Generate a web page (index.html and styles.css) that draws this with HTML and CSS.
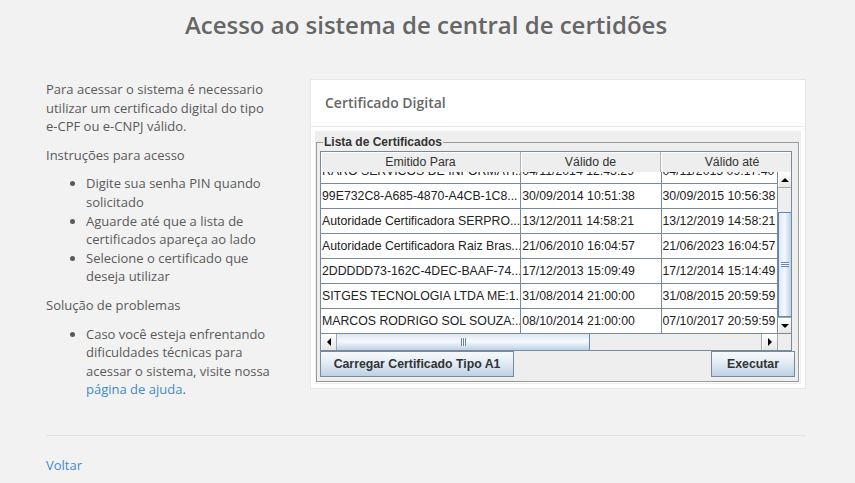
FILE: index.html
```html
<!DOCTYPE html>
<html lang="pt-BR">
<head>
    <meta charset="UTF-8">
    <title>Acesso ao sistema de central de certidões</title>
    <link rel="stylesheet" href="styles.css">
</head>
<body>
    <div class="pagina">
        <h1 class="titulo">Acesso ao sistema de central de certidões</h1>

        <div class="conteudo">
            <!-- Instruções -->
            <div class="info">
                <p>Para acessar o sistema é necessario utilizar um certificado digital do tipo <span class="junto">e-CPF</span> ou <span class="junto">e-CNPJ</span> válido.</p>
                <p>Instruções para acesso</p>
                <ul>
                    <li>Digite sua senha PIN quando solicitado</li>
                    <li>Aguarde até que a lista de certificados apareça ao lado</li>
                    <li>Selecione o certificado que deseja utilizar</li>
                </ul>
                <p>Solução de problemas</p>
                <ul>
                    <li>Caso você esteja enfrentando dificuldades técnicas para acessar o sistema, visite nossa <a href="#">página de ajuda</a>.</li>
                </ul>
            </div>

            <!-- Painel do certificado -->
            <div class="painel">
                <div class="painel-cabecalho">Certificado Digital</div>
                <div class="painel-corpo">
                    <div class="applet">
                        <fieldset class="lista">
                            <legend>Lista de Certificados</legend>

                            <div class="tabela">
                                <div class="tabela-cabecalho">
                                    <div class="col col1">Emitido Para</div>
                                    <div class="col col2">Válido de</div>
                                    <div class="col col3">Válido até</div>
                                </div>

                                <div class="tabela-area">
                                    <div class="linhas">
                                        <div class="linhas-rolagem">
                                            <div class="linha"><div class="cel col1">RARO SERVICOS DE INFORMATI...</div><div class="cel col2">04/11/2014 12:43:29</div><div class="cel col3">04/11/2015 09:17:40</div></div>
                                            <div class="linha"><div class="cel col1">99E732C8-A685-4870-A4CB-1C8...</div><div class="cel col2">30/09/2014 10:51:38</div><div class="cel col3">30/09/2015 10:56:38</div></div>
                                            <div class="linha"><div class="cel col1">Autoridade Certificadora SERPRO...</div><div class="cel col2">13/12/2011 14:58:21</div><div class="cel col3">13/12/2019 14:58:21</div></div>
                                            <div class="linha"><div class="cel col1">Autoridade Certificadora Raiz Bras...</div><div class="cel col2">21/06/2010 16:04:57</div><div class="cel col3">21/06/2023 16:04:57</div></div>
                                            <div class="linha"><div class="cel col1">2DDDDD73-162C-4DEC-BAAF-74...</div><div class="cel col2">17/12/2013 15:09:49</div><div class="cel col3">17/12/2014 15:14:49</div></div>
                                            <div class="linha"><div class="cel col1">SITGES TECNOLOGIA LTDA ME:1...</div><div class="cel col2">31/08/2014 21:00:00</div><div class="cel col3">31/08/2015 20:59:59</div></div>
                                            <div class="linha"><div class="cel col1">MARCOS RODRIGO SOL SOUZA:...</div><div class="cel col2">08/10/2014 21:00:00</div><div class="cel col3">07/10/2017 20:59:59</div></div>
                                        </div>
                                    </div>

                                    <!-- barra de rolagem vertical -->
                                    <div class="barra-v">
                                        <div class="seta seta-v"><span class="tri tri-cima"></span></div>
                                        <div class="trilho-v">
                                            <div class="espaco-v"></div>
                                            <div class="polegar-v"><span class="garra-v"></span></div>
                                        </div>
                                        <div class="seta seta-v"><span class="tri tri-baixo"></span></div>
                                    </div>
                                </div>

                                <!-- barra de rolagem horizontal -->
                                <div class="barra-h">
                                    <div class="seta seta-h"><span class="tri tri-esq"></span></div>
                                    <div class="trilho-h">
                                        <div class="polegar-h"><span class="garra-h"></span></div>
                                    </div>
                                    <div class="seta seta-h"><span class="tri tri-dir"></span></div>
                                    <div class="canto"></div>
                                </div>
                            </div>

                            <div class="botoes">
                                <button class="botao botao-carregar">Carregar Certificado Tipo A1</button>
                                <button class="botao botao-executar">Executar</button>
                            </div>
                        </fieldset>
                    </div>
                </div>
            </div>
        </div>

        <hr class="divisor">
        <a class="voltar" href="#">Voltar</a>
    </div>
</body>
</html>
```

FILE: styles.css
```css
/* Página */
body {
    margin: 0;
    background-color: #f2f2f2;
    font-family: "Open Sans", Arial, sans-serif;
    font-size: 13px;
    line-height: 18.6px;
    color: #5a5a5a;
}

a {
    color: #428bca;
    text-decoration: none;
}

.pagina {
    width: 760px;
    margin-left: 46px;
}

.titulo {
    margin: 12px 0 41px;
    font-size: 24px;
    line-height: 26px;
    font-weight: 600;
    color: #666;
    text-align: center;
}

.conteudo {
    display: grid;
    grid-template-columns: 234px 496px;
    column-gap: 30px;
}

/* Coluna de instruções */
.info {
    padding-top: 1px;
}

.info p {
    margin: 0 0 10px;
}

.info ul {
    margin: 0 0 10px;
    padding-left: 40px;
}

.junto {
    white-space: nowrap;
}

/* Painel */
.painel {
    align-self: start;
    background: #fff;
    border: 1px solid #e6e6e6;
}

.painel-cabecalho {
    height: 46px;
    padding: 0 14px;
    border-bottom: 1px solid #e9e9e9;
    font-size: 14px;
    font-weight: 600;
    line-height: 46px;
    color: #666;
}

.painel-corpo {
    padding: 4px;
}

/* Applet Java */
.applet {
    padding: 4px 2px 2px 1px;
    background: #eeeeee;
    font-family: Arial, "Liberation Sans", sans-serif;
    color: #222;
}

.lista {
    margin: 0;
    padding: 2px 3px 4px;
    border: 1px solid #9a9a9a;
    box-shadow: 1px 1px 0 #fff;
}

.lista legend {
    margin-left: 3px;
    padding: 0 1px;
    font-size: 12px;
    font-weight: bold;
    line-height: 14px;
    color: #333;
}

/* Tabela */
.tabela {
    width: 470px;
    border: 1px solid #7a8a99;
}

.tabela-cabecalho {
    display: flex;
    height: 20px;
    background: #eeeeee;
    font-size: 12.3px;
    line-height: 21px;
    color: #333;
}

.tabela-cabecalho .col {
    text-align: center;
    border-right: 1px solid #a9b4bf;
    box-shadow: inset 1px 1px 0 #fff;
}

.tabela-cabecalho .col3 {
    flex: 1;
    padding-left: 12px;
    border-right: 0;
}

.col1 { width: 199px; }
.col2 { width: 139px; }
.col3 { width: 115px; }

.tabela-area {
    display: flex;
    height: 161px;
}

.linhas {
    width: 456px;
    background: #fff;
    overflow: hidden;
}

.linhas-rolagem {
    margin-top: -13px;
}

.linha {
    display: flex;
    height: 24px;
    border-bottom: 1px solid #7a8a99;
}

.cel {
    padding-left: 1px;
    border-right: 1px solid #7a8a99;
    font-size: 12.3px;
    line-height: 24px;
    white-space: nowrap;
    overflow: hidden;
}

.cel.col3 {
    border-right: 0;
}

/* Barras de rolagem (Metal / Ocean) */
.barra-v {
    display: flex;
    flex-direction: column;
    width: 13px;
    border-left: 1px solid #7a8a99;
}

.seta {
    display: flex;
    align-items: center;
    justify-content: center;
    background: linear-gradient(#ffffff, #e6e6e6);
    box-shadow: inset 1px 1px 0 #fff;
}

.seta-v {
    height: 15px;
}

.seta-v:first-child {
    border-bottom: 1px solid #a0aab4;
}

.seta-v:last-child {
    border-top: 1px solid #a0aab4;
}

.tri {
    width: 0;
    height: 0;
}

.tri-cima {
    border-left: 4px solid transparent;
    border-right: 4px solid transparent;
    border-bottom: 4px solid #000;
}

.tri-baixo {
    border-left: 4px solid transparent;
    border-right: 4px solid transparent;
    border-top: 4px solid #000;
}

.tri-esq {
    border-top: 4px solid transparent;
    border-bottom: 4px solid transparent;
    border-right: 4px solid #000;
}

.tri-dir {
    border-top: 4px solid transparent;
    border-bottom: 4px solid transparent;
    border-left: 4px solid #000;
}

.trilho-v {
    display: flex;
    flex-direction: column;
    flex: 1;
    background: #eeeeee;
}

.espaco-v {
    height: 24px;
}

.polegar-v {
    display: flex;
    align-items: center;
    justify-content: center;
    height: 103px;
    border: 1px solid #6382bf;
    border-right: 0;
    background: linear-gradient(90deg, #dbe7f3, #f6f9fc 45%, #bcd2e8);
}

/* três riscos da garra */
.garra-v {
    width: 8px;
    height: 5px;
    background: repeating-linear-gradient(#6382bf 0 1px, #ffffff 1px 2px);
}

.barra-h {
    display: flex;
    height: 16px;
    border-top: 1px solid #7a8a99;
}

.seta-h {
    width: 15px;
    border-right: 1px solid #a0aab4;
}

.seta-h:nth-child(3) {
    border-right: 0;
    border-left: 1px solid #a0aab4;
}

.trilho-h {
    display: flex;
    flex: 1;
    background: #eeeeee;
}

.polegar-h {
    display: flex;
    align-items: center;
    justify-content: center;
    width: 252px;
    border-right: 1px solid #6382bf;
    background: linear-gradient(#dbe7f3, #f6f9fc 45%, #bcd2e8);
}

.garra-h {
    width: 5px;
    height: 8px;
    background: repeating-linear-gradient(90deg, #6382bf 0 1px, #ffffff 1px 2px);
}

.canto {
    width: 13px;
    border-left: 1px solid #a0aab4;
    background: #eeeeee;
}

/* Botões */
.botoes {
    display: flex;
    justify-content: space-between;
}

.botao {
    height: 26px;
    padding: 0;
    border: 1px solid #7a8a99;
    background: linear-gradient(#f7fafd, #e3ecf5 45%, #bcd0e6);
    font-family: Arial, "Liberation Sans", sans-serif;
    font-size: 12.3px;
    font-weight: bold;
    color: #333;
}

.botao-carregar {
    width: 194px;
}

.botao-executar {
    width: 84px;
}

/* Rodapé */
.divisor {
    margin: 26px 0 20px;
    border: 0;
    border-top: 1px solid #e4e4e4;
}
```
